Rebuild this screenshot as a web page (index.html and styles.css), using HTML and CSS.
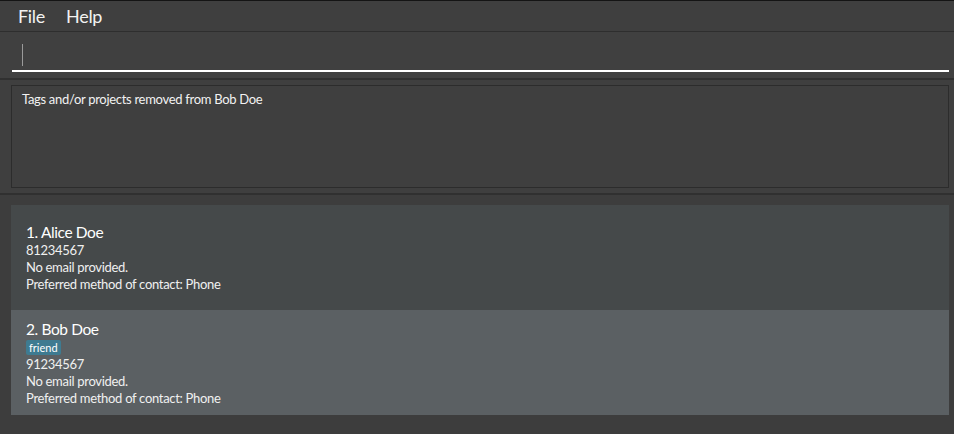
FILE: index.html
```html
<!DOCTYPE html>
<html>
<head>
<meta charset="utf-8">
<link rel="stylesheet" href="styles.css">
</head>
<body>
<div class="app">
  <div class="menubar">
    <span class="menu-item">File</span>
    <span class="menu-item">Help</span>
  </div>
  <div class="command">
    <div class="command-field"><span class="caret"></span></div>
  </div>
  <div class="sep"></div>
  <div class="result">
    <div class="result-box">Tags and/or projects removed from Bob Doe</div>
  </div>
  <div class="sep"></div>
  <div class="list">
    <div class="card card-odd">
      <div class="name">1. Alice Doe</div>
      <div class="line">81234567</div>
      <div class="line">No email provided.</div>
      <div class="line">Preferred method of contact: Phone</div>
    </div>
    <div class="card card-even">
      <div class="name">2. Bob Doe</div>
      <div class="tags"><span class="tag">friend</span></div>
      <div class="line">91234567</div>
      <div class="line">No email provided.</div>
      <div class="line">Preferred method of contact: Phone</div>
    </div>
  </div>
</div>
</body>
</html>
```
FILE: styles.css
```css
html, body {
  margin: 0;
  padding: 0;
  background: #3c3c3c;
}
body {
  font-family: Lato, "Open Sans", sans-serif;
  font-weight: 400;
  color: #ffffff;
}
.app {
  width: 954px;
  height: 434px;
  display: flex;
  flex-direction: column;
  background: #3f3f3f;
  overflow: hidden;
}
.menubar {
  height: 30px;
  border-top: 1px solid #141414;
  border-bottom: 1px solid #2e2e2e;
  display: flex;
  align-items: center;
  gap: 21px;
  padding-left: 18px;
  background: #3f3f3f;
}
.menu-item {
  font-size: 18px;
  color: #f2f2f2;
  line-height: 22px;
  letter-spacing: -0.3px;
}
.command {
  height: 46px;
  padding: 0 5px 0 12px;
  box-sizing: border-box;
  background: #404040;
}
.command-field {
  height: 40px;
  border-bottom: 2px solid #ffffff;
  box-sizing: border-box;
  padding: 12px 0 0 10px;
}
.caret {
  display: block;
  width: 1px;
  height: 22px;
  background: #9a9a9a;
}
.sep {
  height: 2px;
  background: #303030;
}
.result {
  height: 113px;
  padding: 5px 5px 5px 11px;
  box-sizing: border-box;
  background: #3f3f3f;
}
.result-box {
  height: 103px;
  border: 1px solid #2c2c2c;
  box-sizing: border-box;
  padding: 4px 10px;
  font-size: 13px;
  line-height: 18px;
  letter-spacing: -0.3px;
  color: #f2f2f2;
}
.list {
  flex: 1;
  padding: 10px 5px 0 11px;
  background: #3d3d3d;
}
.card {
  height: 105px;
  padding-left: 15px;
  display: flex;
  flex-direction: column;
  justify-content: center;
  box-sizing: border-box;
}
.card-odd {
  background: #45494a;
}
.card-even {
  background: #5b6063;
}
.name {
  font-size: 15.5px;
  line-height: 20px;
  letter-spacing: -0.4px;
  color: #ffffff;
}
.line {
  font-size: 13px;
  line-height: 17px;
  letter-spacing: -0.3px;
  color: #f0f0f0;
}
.tags {
  height: 17px;
  display: flex;
  align-items: center;
}
.tag {
  font-size: 11px;
  line-height: 15px;
  padding: 0 3px;
  background: #3e7b91;
  border-radius: 2px;
  color: #ffffff;
}
```
